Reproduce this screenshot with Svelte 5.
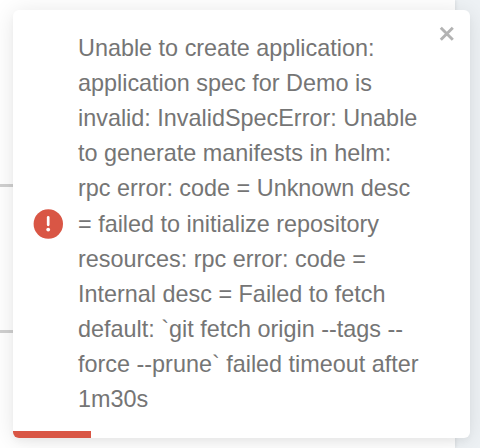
<script>
  const lines = [
    'Unable to create application:',
    'application spec for Demo is',
    'invalid: InvalidSpecError: Unable',
    'to generate manifests in helm:',
    'rpc error: code = Unknown desc',
    '= failed to initialize repository',
    'resources: rpc error: code =',
    'Internal desc = Failed to fetch',
    'default: `git fetch origin --tags --',
    'force --prune` failed timeout after',
    '1m30s'
  ];
</script>

<div class="page">
  <div class="panel">
    <div class="row first"></div>
    <div class="row second"></div>
  </div>
  <div class="toast" role="alert">
    <svg class="icon" viewBox="0 0 30 30">
      <circle cx="15.3" cy="15" r="14.7" fill="#d95645" />
      <path d="M15.2 8.4v7.4" stroke="#fff" stroke-width="2.7" stroke-linecap="round" />
      <circle cx="15.2" cy="20.6" r="1.9" fill="#fff" />
    </svg>
    <div class="message">
      {#each lines as line}<div>{line}</div>{/each}
    </div>
    <button class="close" aria-label="close">
      <svg viewBox="0 0 16 16"><path d="M1.8 1.8L13.8 13.8M13.8 1.8L1.8 13.8" stroke="#b3b3b3" stroke-width="2.9" /></svg>
    </button>
    <div class="progress"></div>
  </div>
</div>

<style>
  :global(body) { margin: 0; }
  .page {
    position: relative;
    width: 480px;
    height: 448px;
    overflow: hidden;
    background: #eef2f5;
  }
  .panel {
    box-sizing: border-box;
    width: 455px;
    height: 448px;
    padding-top: 184px;
    background: #fff;
    box-shadow: 1px 0 3px rgba(0, 0, 0, 0.08);
  }
  .row { height: 3px; background: #d0d0d0; }
  .second { margin-top: 143px; }
  .toast {
    position: absolute;
    left: 13px;
    top: 10px;
    box-sizing: border-box;
    width: 457px;
    height: 428px;
    padding: 0 20px;
    display: flex;
    align-items: center;
    gap: 15px;
    border-radius: 6px;
    overflow: hidden;
    background: #fff;
    box-shadow: 0 2px 24px rgba(0, 0, 0, 0.1), 0 4px 6px rgba(0, 0, 0, 0.03);
  }
  .icon { width: 30px; height: 30px; flex: none; }
  .message {
    padding-top: 0.4px;
    font: 23.4px/35.15px "Liberation Sans", Arial, sans-serif;
    color: #757575;
    white-space: nowrap;
  }
  .close {
    position: absolute;
    top: 16px;
    right: 15px;
    width: 16px;
    height: 16px;
    padding: 0;
    border: 0;
    background: none;
  }
  .close svg { display: block; }
  .progress {
    position: absolute;
    left: 0;
    bottom: 0;
    width: 78px;
    height: 7.4px;
    background: #d95645;
  }
</style>
